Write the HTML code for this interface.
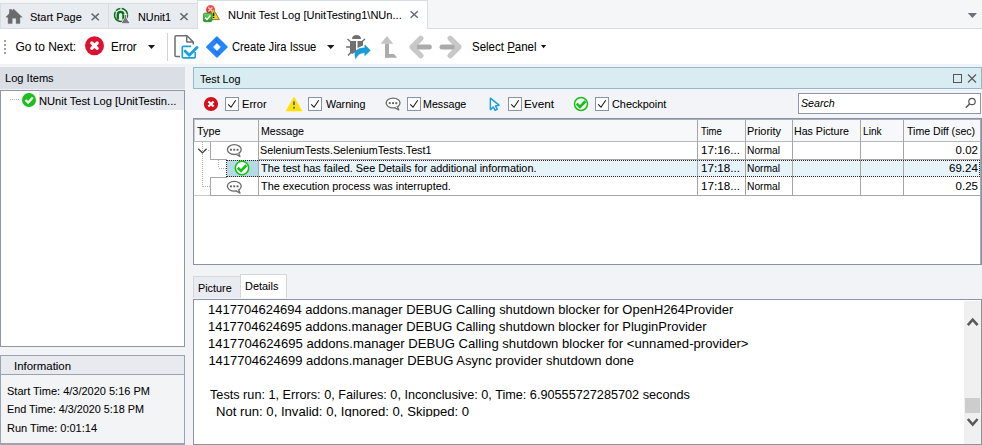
<!DOCTYPE html>
<html><head><meta charset="utf-8">
<style>
*{margin:0;padding:0;box-sizing:border-box}
html,body{width:982px;height:445px;overflow:hidden;background:#f2f3f6;font-family:"Liberation Sans",sans-serif;font-size:11px;color:#1a1a1a}
.a{position:absolute}
.t{position:absolute;white-space:nowrap;line-height:13px;height:13px}
.x{position:absolute;white-space:nowrap;line-height:20px;height:20px;transform-origin:0 0;color:#000;-webkit-text-stroke:0.05px #000}
svg.ov{position:absolute;left:0;top:0;width:982px;height:445px}
</style></head><body>
<!-- ============ tab strip ============ -->
<div class="a" style="left:0;top:0;width:982px;height:29px;background:#f5f6f7"></div>
<div class="a" style="left:0;top:3px;width:197px;height:26px;background:#e8ebef;border-top:1px solid #d8dce3"></div>
<div class="a" style="left:0;top:3px;width:1px;height:26px;background:#d8dce3"></div>
<div class="a" style="left:108px;top:4px;width:1px;height:24px;background:#d8dce3"></div>
<div class="a" style="left:0;top:28px;width:982px;height:1px;background:#d8dce3"></div>
<div class="a" style="left:197px;top:0;width:231px;height:29px;background:#fff;border:1px solid #d8dce3;border-bottom:none"></div>
<!-- ============ toolbar ============ -->
<div class="a" style="left:0;top:29px;width:982px;height:35px;background:#fff"></div>
<div class="a" style="left:167px;top:33px;width:1px;height:28px;background:#d0d3d8"></div>
<!-- ============ left panel ============ -->
<div class="a" style="left:0;top:67px;width:185px;height:22px;background:#dadfe6"></div>
<div class="a" style="left:0;top:90px;width:185px;height:257px;background:#fff;border:1px solid #8e97a7"></div>
<div class="a" style="left:39px;top:91px;width:145px;height:19px;background:#e6e9ee"></div>
<!-- ============ information ============ -->
<div class="a" style="left:0;top:355px;width:185px;height:90px;background:#f3f4f6;border:1px solid #9aa3b3;border-bottom:2px solid #9aa3b3"></div>
<div class="a" style="left:1px;top:356px;width:183px;height:19px;background:#e7eaee;border-bottom:1px solid #9aa3b3"></div>
<!-- ============ test log panel ============ -->
<div class="a" style="left:193px;top:67px;width:789px;height:22px;background:#d8ecf1;border:1px solid #93b9cf"></div>
<div class="a" style="left:193px;top:89px;width:789px;height:29px;background:#f3f4f7"></div>
<div class="a" style="left:798px;top:93px;width:183px;height:21px;background:#fff;border:1px solid #8e97a7"></div>
<!-- grid -->
<div class="a" style="left:193px;top:118px;width:789px;height:147px;background:#fff;border:1px solid #8a93a6"></div>
<div class="a" style="left:194px;top:119px;width:786px;height:22px;background:#f7f8f9;border-top:1px solid #a9b0bb;border-left:1px solid #c9cdd4"></div>
<div class="a" style="left:227px;top:160px;width:31px;height:17px;background:#b4dae6"></div>
<div class="a" style="left:259px;top:160px;width:721px;height:17px;background:#e6f3f8"></div>
<!-- details tabs -->
<div class="a" style="left:193px;top:276px;width:48px;height:22px;background:#e8ebef;border:1px solid #d3d7de;border-bottom:none"></div>
<div class="a" style="left:240px;top:274px;width:47px;height:24px;background:#fff;border:1px solid #d3d7de;border-bottom:none"></div>
<!-- details panel -->
<div class="a" style="left:193px;top:299px;width:789px;height:146px;background:#fff;border:1px solid #8a94a6"></div>
<div class="a" style="left:964px;top:301px;width:17px;height:143px;background:#f0f0f0"></div>
<div class="a" style="left:965px;top:398px;width:15px;height:15px;background:#cdcdcd"></div>

<div class="x" style="left:30.45px;top:7.00px;font-size:11.5px;transform:scaleX(0.9528);">Start Page</div>
<div class="x" style="left:138.06px;top:7.00px;font-size:11.5px;transform:scaleX(0.9412);">NUnit1</div>
<div class="x" style="left:227.64px;top:5.00px;font-size:11.5px;transform:scaleX(0.9615);">NUnit Test Log [UnitTesting1\NUn...</div>
<div class="x" style="left:15.50px;top:37.00px;font-size:12px;">Go to Next:</div>
<div class="x" style="left:111.04px;top:37.00px;font-size:12px;transform:scaleX(0.9615);">Error</div>
<div class="x" style="left:232.37px;top:37.00px;font-size:12px;transform:scaleX(0.9292);">Create Jira Issue</div>
<div class="x" style="left:471.84px;top:37.00px;font-size:12px;transform:scaleX(0.9576);">Select <u>P</u>anel</div>
<div class="x" style="left:5.34px;top:68.00px;font-size:11.5px;transform:scaleX(0.9633);">Log Items</div>
<div class="x" style="left:39.33px;top:91.00px;font-size:11.5px;transform:scaleX(0.9693);">NUnit Test Log [UnitTestin...</div>
<div class="x" style="left:13.51px;top:356.00px;font-size:11.5px;transform:scaleX(0.9911);">Information</div>
<div class="x" style="left:6.64px;top:381.00px;font-size:11.5px;transform:scaleX(0.9554);">Start Time: 4/3/2020 5:16 PM</div>
<div class="x" style="left:6.66px;top:399.00px;font-size:11.5px;transform:scaleX(0.9403);">End Time: 4/3/2020 5:18 PM</div>
<div class="x" style="left:6.64px;top:418.00px;font-size:11.5px;transform:scaleX(0.9581);">Run Time: 0:01:14</div>
<div class="x" style="left:200.10px;top:69.00px;font-size:11.5px;transform:scaleX(0.9302);">Test Log</div>
<div class="x" style="left:241.63px;top:94.00px;font-size:11.5px;transform:scaleX(0.9667);">Error</div>
<div class="x" style="left:326.00px;top:94.00px;font-size:11.5px;transform:scaleX(0.9286);">Warning</div>
<div class="x" style="left:423.37px;top:94.00px;font-size:11.5px;transform:scaleX(0.9267);">Message</div>
<div class="x" style="left:523.98px;top:94.00px;font-size:11.5px;transform:scaleX(1.0179);">Event</div>
<div class="x" style="left:611.86px;top:94.00px;font-size:11.5px;transform:scaleX(0.9446);">Checkpoint</div>
<div class="x" style="left:801.00px;top:93.00px;font-size:11.5px;font-style:italic;transform:scaleX(0.9250);">Search</div>
<div class="x" style="left:196.50px;top:121.00px;font-size:11.5px;transform:scaleX(0.9400);">Type</div>
<div class="x" style="left:260.58px;top:121.00px;font-size:11.5px;transform:scaleX(0.9200);">Message</div>
<div class="x" style="left:701.40px;top:121.00px;font-size:11.5px;transform:scaleX(0.8280);">Time</div>
<div class="x" style="left:747.25px;top:121.00px;font-size:11.5px;transform:scaleX(0.9514);">Priority</div>
<div class="x" style="left:794.48px;top:121.00px;font-size:11.5px;transform:scaleX(0.9241);">Has Picture</div>
<div class="x" style="left:862.62px;top:121.00px;font-size:11.5px;transform:scaleX(0.8800);">Link</div>
<div class="x" style="left:907.00px;top:121.00px;font-size:11.5px;transform:scaleX(0.9189);">Time Diff (sec)</div>
<div class="x" style="left:260.17px;top:140.00px;font-size:11.5px;transform:scaleX(0.9346);">SeleniumTests.SeleniumTests.Test1</div>
<div class="x" style="left:261.00px;top:158.00px;font-size:11.5px;transform:scaleX(0.9450);">The test has failed. See Details for additional information.</div>
<div class="x" style="left:261.00px;top:176.00px;font-size:11.5px;transform:scaleX(0.9455);">The execution process was interrupted.</div>
<div class="x" style="left:700.99px;top:140.00px;font-size:11.5px;transform:scaleX(1.0135);">17:16...</div>
<div class="x" style="left:700.99px;top:158.00px;font-size:11.5px;transform:scaleX(1.0135);">17:18...</div>
<div class="x" style="left:700.99px;top:176.00px;font-size:11.5px;transform:scaleX(1.0135);">17:18...</div>
<div class="x" style="left:747.31px;top:140.00px;font-size:11.5px;transform:scaleX(0.8889);">Normal</div>
<div class="x" style="left:747.31px;top:158.00px;font-size:11.5px;transform:scaleX(0.8889);">Normal</div>
<div class="x" style="left:747.31px;top:176.00px;font-size:11.5px;transform:scaleX(0.8889);">Normal</div>
<div class="x" style="left:955.60px;top:140.00px;font-size:11.5px;">0.02</div>
<div class="x" style="left:948.50px;top:158.00px;font-size:11.5px;transform:scaleX(1.0036);">69.24</div>
<div class="x" style="left:955.60px;top:176.00px;font-size:11.5px;">0.25</div>
<div class="x" style="left:198.06px;top:278.00px;font-size:11.5px;transform:scaleX(0.9400);">Picture</div>
<div class="x" style="left:245.35px;top:276.00px;font-size:11.5px;transform:scaleX(0.9500);">Details</div>
<div class="x" style="left:208.40px;top:300.00px;font-size:13px;transform:scaleX(0.9971);-webkit-text-stroke:0;">1417704624694 addons.manager DEBUG Calling shutdown blocker for OpenH264Provider</div>
<div class="x" style="left:208.40px;top:317.00px;font-size:13px;transform:scaleX(0.9970);-webkit-text-stroke:0;">1417704624695 addons.manager DEBUG Calling shutdown blocker for PluginProvider</div>
<div class="x" style="left:208.39px;top:334.00px;font-size:13px;transform:scaleX(1.0080);-webkit-text-stroke:0;">1417704624695 addons.manager DEBUG Calling shutdown blocker for &lt;unnamed-provider&gt;</div>
<div class="x" style="left:208.40px;top:351.00px;font-size:13px;-webkit-text-stroke:0;">1417704624699 addons.manager DEBUG Async provider shutdown done</div>
<div class="x" style="left:209.60px;top:385.00px;font-size:13px;transform:scaleX(0.9752);-webkit-text-stroke:0;">Tests run: 1, Errors: 0, Failures: 0, Inconclusive: 0, Time: 6.90555727285702 seconds</div>
<div class="x" style="left:216.19px;top:402.00px;font-size:13px;transform:scaleX(1.0096);-webkit-text-stroke:0;">Not run: 0, Invalid: 0, Ignored: 0, Skipped: 0</div>
<svg class="ov" viewBox="0 0 982 445">
<g shape-rendering="crispEdges">
 <!-- grid lines -->
 <rect x="194" y="141" width="786" height="1" fill="#b8b8b8"/>
 <rect x="258" y="120" width="1" height="76" fill="#a6a6a6"/>
 <rect x="697" y="120" width="1" height="76" fill="#a6a6a6"/>
 <rect x="745" y="120" width="1" height="76" fill="#a6a6a6"/>
 <rect x="792" y="120" width="1" height="76" fill="#a6a6a6"/>
 <rect x="860" y="120" width="1" height="76" fill="#a6a6a6"/>
 <rect x="903" y="120" width="1" height="76" fill="#a6a6a6"/>
 <rect x="980" y="119" width="1" height="145" fill="#a3a9b5"/>
 <rect x="258" y="159" width="722" height="1" fill="#a6a6a6"/>
 <rect x="210" y="159" width="17" height="1" fill="#a6a6a6"/>
 <rect x="194" y="195" width="16" height="1" fill="#c8c8c8"/>
 <rect x="210" y="195" width="770" height="1" fill="#a6a6a6"/>
 <rect x="210" y="177" width="17" height="1" fill="#a6a6a6"/>
 <rect x="210" y="142" width="1" height="17" fill="#a6a6a6"/>
 <rect x="210" y="177" width="1" height="18" fill="#a6a6a6"/>
 <!-- selected row dotted border -->
 <line x1="227" y1="160.5" x2="980" y2="160.5" stroke="#3a1a1a" stroke-dasharray="1 1"/>
 <line x1="227" y1="176.5" x2="980" y2="176.5" stroke="#3a1a1a" stroke-dasharray="1 1"/>
 <line x1="226.5" y1="160" x2="226.5" y2="177" stroke="#3a1a1a" stroke-dasharray="1 1"/>
 <line x1="979.5" y1="160" x2="979.5" y2="177" stroke="#3a1a1a" stroke-dasharray="1 1"/>
 <!-- tree dotted lines -->
 <line x1="202.5" y1="142" x2="202.5" y2="187" stroke="#b0b0b0" stroke-dasharray="1 1"/>
 <line x1="203" y1="186.5" x2="210" y2="186.5" stroke="#b0b0b0" stroke-dasharray="1 1"/>
 <rect x="208" y="150" width="1" height="1" fill="#b0b0b0"/>
 <line x1="218.5" y1="160" x2="218.5" y2="168" stroke="#b0b0b0" stroke-dasharray="1 1"/>
 <line x1="219" y1="168.5" x2="226" y2="168.5" stroke="#b0b0b0" stroke-dasharray="1 1"/>
 <line x1="10" y1="99.5" x2="20" y2="99.5" stroke="#b0b0b0" stroke-dasharray="1 1"/>
 
</g>
 <!-- chevron -->
 <path d="M198.3 148.8 L202.4 152.9 L206.5 148.8" fill="none" stroke="#404040" stroke-width="1.3"/>

 <!-- ===== tab icons ===== -->
 <!-- home -->
 <path d="M5.8 17.2 L13.6 9 L22.2 17.2 L19.9 17.2 L19.9 23.6 L16.1 23.6 L16.1 18.2 L12.2 18.2 L12.2 23.6 L8.1 23.6 L8.1 17.2 Z" fill="#6b6b6b" stroke="#6b6b6b" stroke-width="0.4" stroke-linejoin="round"/>
 <rect x="9.2" y="9.2" width="2.7" height="5" fill="#6b6b6b"/>
 <!-- close x -->
 <path d="M91.6 13.6 L98.8 20.2 M98.8 13.6 L91.6 20.2" stroke="#636872" stroke-width="1.45"/>
 <path d="M180.4 13.4 L187.6 20 M187.6 13.4 L180.4 20" stroke="#636872" stroke-width="1.45"/>
 <path d="M410.6 11.2 L417.8 17.8 M417.8 11.2 L410.6 17.8" stroke="#636872" stroke-width="1.45"/>
 <!-- nunit -->
 <circle cx="121" cy="15" r="6.5" fill="none" stroke="#0b6e1a" stroke-width="1.5" stroke-dasharray="30 1.3 4.5 1.3 10" transform="rotate(-60 121 15)"/>
 <path d="M117.8 19.5 L117.8 14.5 Q117.8 11.8 120.6 11.8 Q123.4 11.8 123.4 14.5 L123.4 19.5" fill="none" stroke="#0b6e1a" stroke-width="2.3"/>
 <path d="M123.5 14.2 L127.5 14.2 L127 15.2 L127 18 L131 23.8 L120.5 23.8 L124 18 L124 15.2 Z" fill="#fff"/>
 <path d="M124.5 15 L126.3 15 L126.3 18.3 L129.8 23.2 L121.5 23.2 L124.5 18.3 Z" fill="#777"/>
 <!-- active tab combo icon -->
 <defs><linearGradient id="gg" x1="0" y1="0" x2="0" y2="1"><stop offset="0" stop-color="#6fd26f"/><stop offset="1" stop-color="#1f9a1f"/></linearGradient>
 <linearGradient id="rg" x1="0" y1="0" x2="0" y2="1"><stop offset="0" stop-color="#ff5a5a"/><stop offset="1" stop-color="#d01818"/></linearGradient></defs>
 <circle cx="210.5" cy="9.6" r="4.5" fill="url(#rg)"/>
 <path d="M208.4 7.5 L212.4 11.5 M212.4 7.5 L208.4 11.5" stroke="#ffd0d0" stroke-width="1.3"/>
 <path d="M213.6 9.6 L219.3 19.4 L208 19.4 Z" fill="#f5dc00" stroke="#f5dc00" stroke-width="0.5" stroke-linejoin="round"/>
 <path d="M213.9 10.2 L219.4 19.6 L212 19.6" fill="none" stroke="#5d5d8a" stroke-width="0.8" stroke-linejoin="round"/>
 <rect x="212.8" y="12.7" width="1.5" height="3.3" fill="#111"/>
 <rect x="212.8" y="16.8" width="1.5" height="1.2" fill="#111"/>
 <rect x="203.4" y="13.1" width="8.6" height="8.6" rx="1.6" fill="url(#gg)" stroke="#178017" stroke-width="0.7"/>
 <path d="M205.1 17.6 L207 19.5 L210.4 15.4" fill="none" stroke="#fff" stroke-width="1.5"/>
 <!-- strip dropdown -->
 <path d="M967.8 13 L977 13 L972.4 18 Z" fill="#6b707a"/>

 <!-- ===== toolbar icons ===== -->
 <!-- grip -->
 <rect x="4" y="40" width="2" height="2" fill="#a0a0a0"/>
 <rect x="4" y="44" width="2" height="2" fill="#a0a0a0"/>
 <rect x="4" y="48" width="2" height="2" fill="#a0a0a0"/>
 <rect x="4" y="52" width="2" height="2" fill="#a0a0a0"/>
 <!-- error -->
 <circle cx="94.5" cy="45.7" r="9.5" fill="#de1131"/>
 <path d="M91.8 43 L97.2 48.4 M97.2 43 L91.8 48.4" stroke="#fff" stroke-width="3.2" stroke-linecap="round"/>
 <path d="M148 45 L155 45 L151.5 49 Z" fill="#1a1a1a"/>
 <!-- doc check -->
 <path d="M180 56.6 L176 56.6 Q175 56.6 175 55.6 L175 36.8 Q175 35.8 176 35.8 L187 35.8 L193.3 42.1 L193.3 44.6" fill="none" stroke="#6e6e6e" stroke-width="1.5" stroke-linejoin="round"/>
 <path d="M186.7 36.2 L186.7 41.2 Q186.7 42.1 187.6 42.1 L193 42.1" fill="none" stroke="#6e6e6e" stroke-width="1.5"/>
 <path d="M191 46.3 L183.2 46.3 Q182.3 46.3 182.3 47.2 L182.3 56.9 Q182.3 57.8 183.2 57.8 L194.3 57.8 Q195.2 57.8 195.2 56.9 L195.2 52" fill="none" stroke="#1ea0e0" stroke-width="1.7"/>
 <path d="M185.2 51.2 L189.3 55.2 L197 47.5" fill="none" stroke="#1ea0e0" stroke-width="3" stroke-linecap="round" stroke-linejoin="round"/>
 <!-- jira -->
 <path d="M216.9 37 L227 47 L216.9 57 L206.8 47 Z" fill="#2684ff" stroke="#2684ff" stroke-width="1.6" stroke-linejoin="round"/>
 <path d="M215.2 39.2 L219.6 43.6 M215.2 50.4 L219.6 54.8" stroke="#1551b8" stroke-width="1.8" opacity="0.35"/>
 <path d="M216.95 43.6 L220.3 47 L216.95 50.4 L213.6 47 Z" fill="#fff" stroke="#fff" stroke-width="0.8" stroke-linejoin="round"/>
 <path d="M327 45 L334.5 45 L330.75 49 Z" fill="#1a1a1a"/>
 <!-- bug -->
 <path d="M352 39 A4.4 4 0 0 1 361 39 Z" fill="#707070"/>
 <path d="M350 41 L356 41 L356 52 L352 54 L350 52 Z" fill="#707070"/>
 <path d="M357.5 41 L363 41 L363 45.5 L357.5 48 Z" fill="#707070"/>
 <path d="M347.5 39 L351 42 M365 39 L361.5 42 M346 47 L350 47 M348 55.5 L352 51.5" stroke="#707070" stroke-width="1.5"/>
 <path d="M355.6 58.8 Q352 48.2 364.8 47.8 L364.8 44.8 L370.4 50.4 L364.8 55.8 L364.8 52.8 Q358.5 52.6 355.6 58.8 Z" fill="#1a9ad8" stroke="#1a9ad8" stroke-width="0.5" stroke-linejoin="round"/>
 <!-- up-turn -->
 <path d="M380.6 43.7 L387 36.1 L393.2 43.7 Z" fill="#c4c4c4"/>
 <rect x="385" y="43.7" width="4" height="14" fill="#ababab"/>
 <path d="M385 54 L394 54 L397.2 57.7 L385 57.7 Z" fill="#ababab"/>
 <!-- left / right arrows -->
 <path d="M420.8 38.3 L412.2 47 L420.8 55.7" fill="none" stroke="#c8c8c8" stroke-width="5.4" stroke-linecap="round" stroke-linejoin="round"/>
 <path d="M419 47 L429.3 47" stroke="#aaaaaa" stroke-width="5" stroke-linecap="round"/>
 <path d="M450.2 38.3 L458.8 47 L450.2 55.7" fill="none" stroke="#c8c8c8" stroke-width="5.4" stroke-linecap="round" stroke-linejoin="round"/>
 <path d="M442 47 L452.3 47" stroke="#aaaaaa" stroke-width="5" stroke-linecap="round"/>
 <path d="M541 45 L546.2 45 L543.6 48.3 Z" fill="#111"/>

 <!-- ===== panel header buttons ===== -->
 <rect x="953.5" y="74.5" width="8" height="8" fill="none" stroke="#555" stroke-width="1"/>
 <path d="M968 74.5 L976 82.5 M976 74.5 L968 82.5" stroke="#555" stroke-width="1.1"/>

 <!-- ===== filter bar ===== -->
 <circle cx="211" cy="104" r="7.1" fill="#d4101f"/>
 <path d="M208.4 101.4 L213.6 106.6 M213.6 101.4 L208.4 106.6" stroke="#fff" stroke-width="2.1"/>
 <path d="M294 97 L302 111 L286 111 Z" fill="#ffe100" stroke="#ffe100" stroke-width="0.5" stroke-linejoin="round"/>
 <rect x="293" y="101.4" width="2" height="3.6" fill="#6a7090"/>
 <rect x="293" y="106.8" width="2" height="1.9" fill="#6a7090"/>
 <g fill="none" stroke="#8a93a6" stroke-width="1" shape-rendering="crispEdges">
  <rect x="225.5" y="97.5" width="13" height="13" fill="#fff"/>
  <rect x="308.5" y="97.5" width="13" height="13" fill="#fff"/>
  <rect x="407.5" y="97.5" width="13" height="13" fill="#fff"/>
  <rect x="508.5" y="97.5" width="13" height="13" fill="#fff"/>
  <rect x="595.5" y="97.5" width="13" height="13" fill="#fff"/>
 </g>
 <g fill="none" stroke="#1a1a1a" stroke-width="1.1">
  <path d="M228.2 104.4 L231 107.2 L235.7 100.2"/>
  <path d="M311.2 104.4 L314 107.2 L318.7 100.2"/>
  <path d="M410.2 104.4 L413 107.2 L417.7 100.2"/>
  <path d="M511.2 104.4 L514 107.2 L518.7 100.2"/>
  <path d="M598.2 104.4 L601 107.2 L605.7 100.2"/>
 </g>
 <!-- message bubble -->
 <g id="bub">
 <ellipse cx="393.1" cy="103" rx="6.9" ry="4.9" fill="#fff" stroke="#6b6b6b" stroke-width="1.3"/>
 <path d="M394.6 107.6 L398.8 109.9 L397.4 106.6" fill="#fff" stroke="#6b6b6b" stroke-width="1.2" stroke-linejoin="round"/>
 <rect x="388.8" y="102.2" width="1.9" height="1.9" fill="#606060"/>
 <rect x="392.1" y="102.2" width="1.9" height="1.9" fill="#606060"/>
 <rect x="395.4" y="102.2" width="1.9" height="1.9" fill="#606060"/>
 </g>
 <!-- cursor -->
 <path d="M490.4 98.2 L499 105.2 L495.4 105.9 L497.3 109.2 L495.2 110.3 L493.2 107 L490.4 109.6 Z" fill="#fff" stroke="#1a9ee4" stroke-width="1.5" stroke-linejoin="round"/>
 <!-- checkpoint -->
 <circle cx="581" cy="104" r="6.5" fill="none" stroke="#17c017" stroke-width="1.5"/>
 <path d="M576.8 103.7 L580 106.9 L585.4 101.3" fill="none" stroke="#17c017" stroke-width="2.7"/>
 <!-- search magnifier -->
 <circle cx="972" cy="101.5" r="3.2" fill="none" stroke="#555" stroke-width="1.2"/>
 <path d="M969.8 103.8 L965.8 107.8" stroke="#555" stroke-width="1.5"/>

 <!-- ===== grid icons ===== -->
 <use href="#bub" x="-158.8" y="46.6"/>
 <use href="#bub" x="-158.8" y="83.2"/>
 <circle cx="242" cy="168" r="6.7" fill="#fff" stroke="#17c017" stroke-width="1.6"/>
 <path d="M237.8 167.7 L241 170.9 L246.4 165.3" fill="none" stroke="#17c017" stroke-width="2.7"/>

 <!-- tree check -->
 <circle cx="29" cy="100" r="7" fill="#1cc01c"/>
 <path d="M25.5 100 L28.2 102.6 L32.8 97.5" fill="none" stroke="#fff" stroke-width="2.2"/>

 <rect x="194" y="417" width="770" height="27" fill="#fff"/>
 <!-- scrollbar arrows -->
 <path d="M967.8 325.2 L972.7 319.6 L977.6 325.2" fill="none" stroke="#5a5a5a" stroke-width="2.6"/>
 <path d="M967.8 419 L972.7 424.6 L977.6 419" fill="none" stroke="#5a5a5a" stroke-width="2.6"/>
</svg>
</body></html>
